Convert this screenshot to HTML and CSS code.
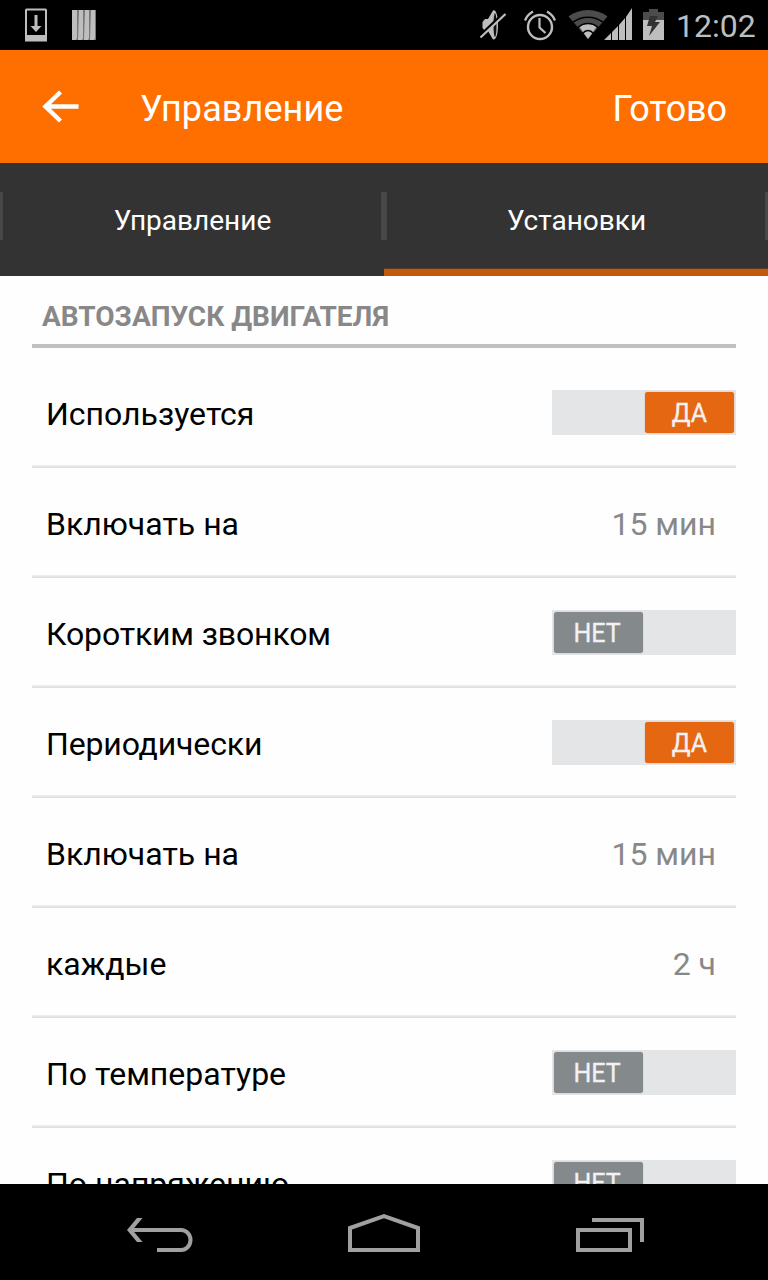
FILE: index.html
```html
<!DOCTYPE html>
<html lang="ru">
<head>
    <meta charset="UTF-8">
    <meta name="viewport" content="width=device-width, initial-scale=1.0">
    <title>Управление</title>
    <link rel="stylesheet" href="styles.css">
</head>
<body>
    <div class="screen">
        <div class="status-bar">
            <svg class="status-left" width="80" height="50" viewBox="20 0 80 50">
                <rect x="26" y="9.500" width="20" height="30" rx="0.500" fill="none" stroke="#bebebe" stroke-width="2"/>
                <path d="M25 35h22v6.500H25z" fill="#bebebe"/>
                <path d="M34.500 15h3v11h4L36 32 30.500 26h4z" fill="#bebebe"/>
                <path d="M72 10h24v30H72z" fill="#777"/>
                <path d="M72 10h5v28l-1 2h-4zM79 10h4v28l-1 2h-4zM85 10h4v28l-1 2h-4zM91 10h4v28l-1 2h-4z" fill="#bebebe"/>
            </svg>
            <svg width="193" height="50" viewBox="475 0 193 50">
                <!-- muted -->
                <path d="M482.500 22l2.500-3h3l5-8.500c3-1.500 5 5 5 14.500s-2 15.500-5 14.500L488 31h-3l-2.500-3z" fill="#bebebe"/>
                <ellipse cx="495" cy="25" rx="1.500" ry="12" fill="#111"/>
                <path d="M480 35.500L504.500 12.500" stroke="#000" stroke-width="2.500"/>
                <path d="M480.500 37.500L505.500 14" stroke="#bebebe" stroke-width="2.200"/>
                <!-- alarm -->
                <circle cx="540" cy="27" r="12" fill="none" stroke="#bebebe" stroke-width="2.400"/>
                <path d="M539.500 18v9.500l6 5.500M525 20.500q2-5.500 8-9M555 20.500q-2-5.500-8-9" fill="none" stroke="#bebebe" stroke-width="2.200"/>
                <!-- wifi -->
                <path d="M588 39L568.500 16.500Q577 10 588 10t19.500 6.500z" fill="#4c4c4c"/>
                <path d="M588 39l-8.500-12q3.500-3 8.500-3t8.500 3z" fill="#bebebe"/>
                <path d="M573 22.200q6.500-5 15-5t15 5M577.500 28q4-4.500 10.500-4.500t10.500 4.500M582.500 33.500q2.500-3 5.500-3t5.500 3" fill="none" stroke="#000" stroke-width="1.500"/>
                <!-- signal -->
                <path d="M604 40l7-7V40zM612 32l6-6V40h-6zM619 25l6-7V40h-6zM626 17l6-9V40h-6z" fill="#bebebe"/>
                <!-- battery -->
                <path d="M643 12h6V9h9v3h6v9h-21z" fill="#4c4c4c"/>
                <path d="M643 20h21v20h-21z" fill="#bebebe"/>
                <path d="M650 16h8l-3 6h5l-11 14 3-10h-5z" fill="#333"/>
            </svg>
            <span class="clock">12:02</span>
        </div>

        <div class="action-bar">
            <svg class="back" width="40" height="36" viewBox="40 89 40 36">
                <path d="M60.500 92L45.500 106.500l15 14.500M46 106.500h32.500" fill="none" stroke="#fff" stroke-width="4.500"/>
            </svg>
            <h1 class="title">Управление</h1>
            <span class="done">Готово</span>
        </div>

        <div class="tabs">
            <div class="tab">Управление</div>
            <div class="tab active">Установки</div>
        </div>

        <div class="content">
            <h2 class="section-title">АВТОЗАПУСК ДВИГАТЕЛЯ</h2>
            <div class="row">
                <span class="label">Используется</span>
                <div class="toggle on"><span class="knob">ДА</span></div>
            </div>
            <div class="row">
                <span class="label">Включать на</span>
                <span class="value">15 мин</span>
            </div>
            <div class="row">
                <span class="label tight">Коротким звонком</span>
                <div class="toggle"><span class="knob">НЕТ</span></div>
            </div>
            <div class="row">
                <span class="label tight">Периодически</span>
                <div class="toggle on"><span class="knob">ДА</span></div>
            </div>
            <div class="row">
                <span class="label">Включать на</span>
                <span class="value">15 мин</span>
            </div>
            <div class="row">
                <span class="label">каждые</span>
                <span class="value">2 ч</span>
            </div>
            <div class="row">
                <span class="label">По температуре</span>
                <div class="toggle"><span class="knob">НЕТ</span></div>
            </div>
            <div class="row">
                <span class="label">По напряжению</span>
                <div class="toggle"><span class="knob">НЕТ</span></div>
            </div>
        </div>

        <div class="nav-bar">
            <svg width="768" height="96" viewBox="0 1184 768 96" fill="none" stroke="#a0a0a0" stroke-width="4">
                <path d="M129 1230h52a9.500 10 0 0 1 0 20h-24"/>
                <path d="M127 1230L137 1218h5.500L132.500 1230l10 12H137z" fill="#a0a0a0" stroke="none"/>
                <path d="M350 1250v-22l34-12 34 12V1250z"/>
                <path d="M578 1230h52v20h-52zM592 1220h50v22"/>
            </svg>
        </div>
    </div>
</body>
</html>
```

FILE: styles.css
```css
:root {
    --orange: #ff6f00;
    --orange-dark: #e66712;
    --dark: #333333;
    --gray: #888888;
}
body {
    margin: 0;
    font-family: Roboto, 'Noto Sans', sans-serif;
    background-color: #fefefe;
    color: #000;
}
svg {
    display: block;
    flex: none;
}
.screen {
    display: flex;
    flex-direction: column;
    width: 768px;
    height: 1280px;
    overflow: hidden;
}
.status-bar {
    display: flex;
    height: 50px;
    flex: none;
    background-color: #000;
    padding-left: 20px;
}
.status-left {
    margin-right: 375px;
}
.clock {
    margin-left: 8px;
    font-size: 32px;
    line-height: 52px;
    color: #bebebe;
}
.action-bar {
    display: flex;
    align-items: center;
    height: 113px;
    flex: none;
    box-sizing: border-box;
    padding: 5px 41px 0 40px;
    background-color: var(--orange);
    color: #fff;
    font-size: 36px;
}
.back {
    margin-top: -4px;
}
.title {
    flex: 1;
    margin: 0 0 0 60px;
    font-size: 36px;
    font-weight: 400;
    letter-spacing: 0.1px;
}
.done {
    letter-spacing: -0.1px;
}
.tabs {
    display: flex;
    height: 113px;
    flex: none;
    background-color: var(--dark);
    color: #fff;
}
/* the short dividers sit on both edges of each tab */
.tab {
    flex: 1;
    box-sizing: border-box;
    padding-left: 1px;
    background-image: linear-gradient(90deg, #484848 2px, #3d3d3d 4px), linear-gradient(270deg, #484848 2px, #3d3d3d 4px);
    background-position: left 29px, right 29px;
    background-size: 3px 48px;
    background-repeat: no-repeat;
    text-align: center;
    font-size: 28px;
    line-height: 116px;
}
.tab.active {
    box-shadow: inset 0 -7px #c25a0d, inset 0 -8px #5a3a24;
}
.content {
    flex: 1;
    min-height: 0;
    overflow: hidden;
    padding: 0 32px;
}
.section-title {
    height: 68px;
    margin: 0 0 10px;
    padding-left: 10px;
    border-bottom: 4px solid #c0c0c0;
    color: var(--gray);
    font-size: 28px;
    font-weight: 700;
    line-height: 81px;
}
.row {
    display: flex;
    justify-content: space-between;
    align-items: center;
    height: 110px;
    box-sizing: border-box;
    padding: 2px 0 3px 14px;
    background: linear-gradient(#f0f0f0, #dcdcdc) bottom / 100% 3px no-repeat;
    font-size: 32px;
}
.label,
.value {
    padding-top: 3px;
}
.label.tight {
    letter-spacing: -0.15px;
}
.value {
    padding-right: 20px;
    color: var(--gray);
}
.toggle {
    display: flex;
    width: 184px;
    height: 45px;
    box-sizing: border-box;
    padding: 2px;
    background-color: #e4e5e7;
}
.toggle.on {
    justify-content: flex-end;
}
.knob {
    width: 89px;
    height: 41px;
    box-sizing: border-box;
    padding-right: 3px;
    border-radius: 3px;
    background-color: #84898c;
    box-shadow: 0 0 1px #84898c;
    color: #f2f2f2;
    font-size: 25px;
    -webkit-text-stroke: 0.3px #f2f2f2;
    line-height: 44px;
    text-align: center;
}
.toggle.on .knob {
    padding-right: 0;
    background-color: var(--orange-dark);
    box-shadow: 0 0 1px var(--orange-dark);
}
.nav-bar {
    height: 96px;
    flex: none;
    background-color: #000;
}
```
